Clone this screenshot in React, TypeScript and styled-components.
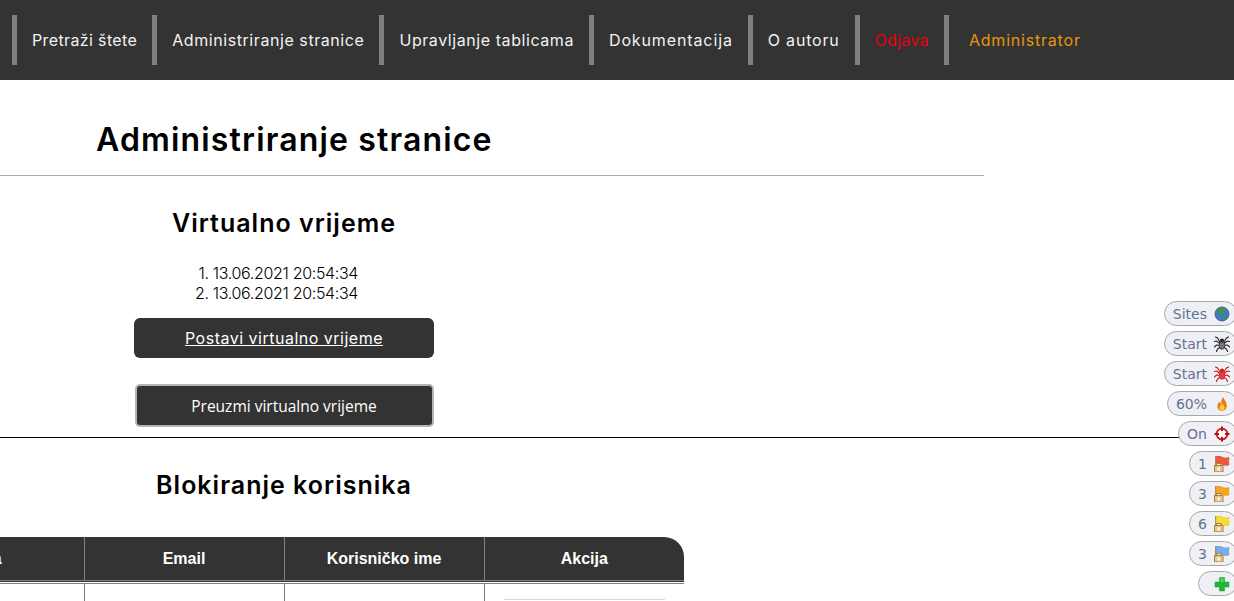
import React from "react";
import styled, { createGlobalStyle } from "styled-components";

const GlobalStyle = createGlobalStyle`
	html, body {
		margin: 0;
		padding: 0;
		height: 601px;
		overflow: hidden;
		background: #ffffff;
		font-family: "Inter", "Noto Sans", sans-serif;
	}
`;

const Page = styled.div`
	width: 1234px;
	height: 601px;
	overflow: hidden;
	position: relative;
`;

const Header = styled.header`
	display: flex;
	align-items: center;
	height: 80px;
	padding-left: 12px;
	background-color: #333333;
`;

const NavItem = styled.a<{ $color?: string; $track: number; $inset?: number }>`
	display: flex;
	align-items: center;
	height: 50px;
	padding: 0 15px 0 ${(p) => p.$inset || 15}px;
	border-left: 5px solid #808080;
	color: ${(p) => p.$color || "#f2f2f2"};
	font-size: 16px;
	letter-spacing: ${(p) => p.$track}px;
	white-space: nowrap;
`;

const TitleBlock = styled.div`
	width: 984px;
	height: 96px;
	box-sizing: border-box;
	padding: 40px 0 0 96px;
	border-bottom: 1px solid #aaaaaa;
`;

const Title = styled.h1`
	margin: 0;
	font-size: 32px;
	line-height: 40px;
	font-weight: 600;
	letter-spacing: 1.15px;
	color: #000000;
`;

const Section = styled.section`
	width: 568px;
	display: flex;
	flex-direction: column;
	align-items: center;
`;

const SectionTitle = styled.h2`
	margin: 31px 0 0;
	font-size: 25px;
	line-height: 32px;
	font-weight: 600;
	letter-spacing: 1px;
	color: #000000;
`;

const Times = styled.div`
	margin-top: 24px;
	padding-right: 15px;
	font-size: 16px;
	font-weight: 300;
	line-height: 20px;
	letter-spacing: -0.33px;
	text-align: right;
	color: #000000;
`;

const LinkButton = styled.a`
	display: flex;
	align-items: center;
	justify-content: center;
	width: 300px;
	height: 40px;
	margin-top: 15px;
	border-radius: 6px;
	background-color: #333333;
	color: #ffffff;
	font-size: 16px;
	letter-spacing: 0.5px;
	text-decoration: underline;
`;

const PlainButton = styled.button`
	width: 299px;
	height: 43px;
	margin-top: 26px;
	box-sizing: border-box;
	border: 2px solid #b4b4b4;
	border-radius: 5px;
	background-color: #333333;
	color: #ffffff;
	font-family: "Open Sans", sans-serif;
	font-size: 15.5px;
`;

const Divider = styled.hr`
	margin: 10px 0 0;
	border: 0;
	height: 1px;
	background-color: #000000;
`;

const TableClip = styled.div`
	margin-top: 36px;
	overflow: hidden;
`;

const UsersTable = styled.table`
	margin-left: -116px;
	border-collapse: collapse;
	table-layout: fixed;
	width: 800px;
	font-family: "Liberation Sans", Arial, sans-serif;
`;

const HeadCell = styled.th`
	width: 200px;
	height: 45px;
	padding: 0;
	box-sizing: border-box;
	border-left: 1px solid #808080;
	background-color: #333333;
	color: #ffffff;
	font-size: 16px;
	font-weight: 700;

	&:first-child {
		border-left: 0;
	}

	&:last-child {
		border-top-right-radius: 20px;
	}
`;

const HeadRow = styled.tr`
	border-bottom: 4px double #808080;
`;

const BodyCell = styled.td`
	height: 40px;
	padding: 15px 19px 0;
	box-sizing: border-box;
	vertical-align: top;
	border-left: 1px solid #808080;

	&:first-child {
		border-left: 0;
	}
`;

const ActionStub = styled.div`
	height: 30px;
	border-top: 1px solid #d8d8d8;
	background-color: #ffffff;
`;

const Dock = styled.aside`
	position: absolute;
	top: 301px;
	right: -3px;
	display: flex;
	flex-direction: column;
	align-items: flex-end;
	gap: 5px;
`;

const Pill = styled.div`
	display: flex;
	align-items: center;
	justify-content: flex-end;
	gap: 7px;
	height: 25px;
	min-width: 39px;
	box-sizing: border-box;
	padding: 0 6px 0 8px;
	border: 1px solid #a8a8a8;
	border-radius: 13px;
	background-color: #eef0f5;
	color: #667090;
	font-family: "DejaVu Sans", sans-serif;
	font-size: 14px;
`;

const Icon = styled.svg`
	display: block;
	width: 16px;
	height: 16px;
	flex: none;
`;

const Globe = () => (
	<Icon viewBox="0 0 16 16">
		<circle cx="8" cy="8" r="7" fill="#3f78c8" stroke="#2f4f80" strokeWidth="0.8" />
		<path d="M5 2.500c2-1 5-1 6 .5s-1 3-2.500 3.500-1 2-2.500 2S3 7 3.500 5 4 3 5 2.500z" fill="#3f9a35" />
		<path d="M9 9.500c1.500-.5 3.500 0 3.500 1.500S10.500 14 9.500 13.500 8 10 9 9.500z" fill="#3f9a35" />
	</Icon>
);

const Spider = ({ color, body }: { color: string; body: string }) => (
	<Icon viewBox="0 0 16 16">
		<g fill="none" stroke={color} strokeWidth="1.100" strokeLinecap="round">
			<path d="M6 6 3.500 2 1.500 1M6 7.500 2.500 5 .3 5.500M6 9.500 2.500 9 .3 11M6.500 11 3.500 13 2.500 15.500" />
			<path d="M10 6l2.500-4 2-1M10 7.500L13.500 5l2.200.5M10 9.500l3.500-.5 2.200 2M9.500 11l3 2 1 2.500" />
		</g>
		<circle cx="8" cy="4.500" r="2" fill={color} />
		<ellipse cx="8" cy="9.500" rx="3" ry="3.800" fill={body} stroke={color} strokeWidth="0.7" />
	</Icon>
);

const Flame = () => (
	<Icon viewBox="0 0 16 16">
		<path d="M9 .8c.5 2.500 3.800 4.600 3.800 8.700 0 3.300-2.200 5.500-4.800 5.500s-4.600-2-4.600-4.800c0-2.200 1.300-3.400 2-4.700.6 1 .8 1.600 1.500 2.200C7.400 5.500 7.600 3 9 .8z" fill="#ee7a12" />
		<path d="M8.300 7c.3 1.500 2.300 2.700 2.300 5 0 1.600-1.200 2.600-2.600 2.600S5.500 13.500 5.500 12c0-1.800 2-3 2.800-5z" fill="#fbd13c" />
	</Icon>
);

const Target = () => (
	<Icon viewBox="0 0 16 16">
		<circle cx="8" cy="8" r="5.400" fill="#ffffff" stroke="#c4161c" strokeWidth="1.800" />
		<path d="M8 .5v4.500M8 11v4.500M.5 8H5M11 8h4.500" stroke="#b01015" strokeWidth="2" />
	</Icon>
);

const Flag = ({ fill, edge }: { fill: string; edge: string }) => (
	<Icon viewBox="0 0 16 16">
		<path d="M1.800 0v9" stroke="#9a7a40" strokeWidth="1.200" />
		<path d="M2.300 .5c1.500-.8 4-.6 5.500.4 1.800 1.100 4 1.400 7.200.6-.4 2.500-.4 5 0 7.500-3 .8-5 .3-6.500-.6-2-1.200-4.400-1.300-6.200-.5z" fill={fill} stroke={edge} strokeWidth="0.5" />
		<rect x=".5" y="9.500" width="8.500" height="6.500" fill="#e8c88a" stroke="#a8803f" strokeWidth="1" />
		<path d="M2.500 9.500V7.500h4.500v2" fill="none" stroke="#a8803f" strokeWidth="1.200" />
		<rect x="3.500" y="11.500" width="2.500" height="3" fill="#fff6e0" />
	</Icon>
);

const Plus = () => (
	<Icon viewBox="0 0 16 16">
		<path d="M5.500 1.500h5v4.500h4.500v5h-4.500v4h-5v-4H1V6h4.500z" fill="#25b33a" stroke="#1b9a30" strokeWidth="0.5" />
		<path d="M6.500 2.500h3v3.500H6.500z" fill="#5fd66f" />
	</Icon>
);

const navLinks = [
	{ label: "Pretraži štete", track: 0.37 },
	{ label: "Administriranje stranice", track: 0.57 },
	{ label: "Upravljanje tablicama", track: 0.57 },
	{ label: "Dokumentacija", track: 0.88 },
	{ label: "O autoru", track: 0.8 },
];

const dockItems: { label: string; icon: React.ReactNode }[] = [
	{ label: "Sites", icon: <Globe /> },
	{ label: "Start", icon: <Spider color="#222222" body="#777777" /> },
	{ label: "Start", icon: <Spider color="#c4161c" body="#e04040" /> },
	{ label: "60%", icon: <Flame /> },
	{ label: "On", icon: <Target /> },
	{ label: "1", icon: <Flag fill="#f0583a" edge="#d84020" /> },
	{ label: "3", icon: <Flag fill="#f9a51f" edge="#e88a10" /> },
	{ label: "6", icon: <Flag fill="#f9dc30" edge="#e0b810" /> },
	{ label: "3", icon: <Flag fill="#78aee8" edge="#5088c8" /> },
	{ label: "", icon: <Plus /> },
];

const App: React.FC = () => {
	return (
		<Page>
			<GlobalStyle />
			<Header>
				{navLinks.map((link) => {
					return (
						<NavItem key={link.label} $track={link.track}>
							{link.label}
						</NavItem>
					);
				})}
				<NavItem $color="#e6000f" $track={0.3}>
					Odjava
				</NavItem>
				<NavItem $color="#e8960c" $track={0.8} $inset={20}>
					Administrator
				</NavItem>
			</Header>
			<TitleBlock>
				<Title>Administriranje stranice</Title>
			</TitleBlock>
			<Section>
				<SectionTitle>Virtualno vrijeme</SectionTitle>
				<Times>
					<div>1. 13.06.2021 20:54:34</div>
					<div>2. 13.06.2021 20:54:34</div>
				</Times>
				<LinkButton>Postavi virtualno vrijeme</LinkButton>
				<PlainButton>Preuzmi virtualno vrijeme</PlainButton>
			</Section>
			<Divider />
			<Section>
				<SectionTitle>Blokiranje korisnika</SectionTitle>
			</Section>
			<TableClip>
				<UsersTable>
					<thead>
						<HeadRow>
							<HeadCell>Šifra</HeadCell>
							<HeadCell>Email</HeadCell>
							<HeadCell>Korisničko ime</HeadCell>
							<HeadCell>Akcija</HeadCell>
						</HeadRow>
					</thead>
					<tbody>
						<tr>
							<BodyCell />
							<BodyCell />
							<BodyCell />
							<BodyCell>
								<ActionStub />
							</BodyCell>
						</tr>
					</tbody>
				</UsersTable>
			</TableClip>
			<Dock>
				{dockItems.map((item, index) => {
					return (
						<Pill key={index}>
							{item.label && <span>{item.label}</span>}
							{item.icon}
						</Pill>
					);
				})}
			</Dock>
		</Page>
	);
};

export default App;
